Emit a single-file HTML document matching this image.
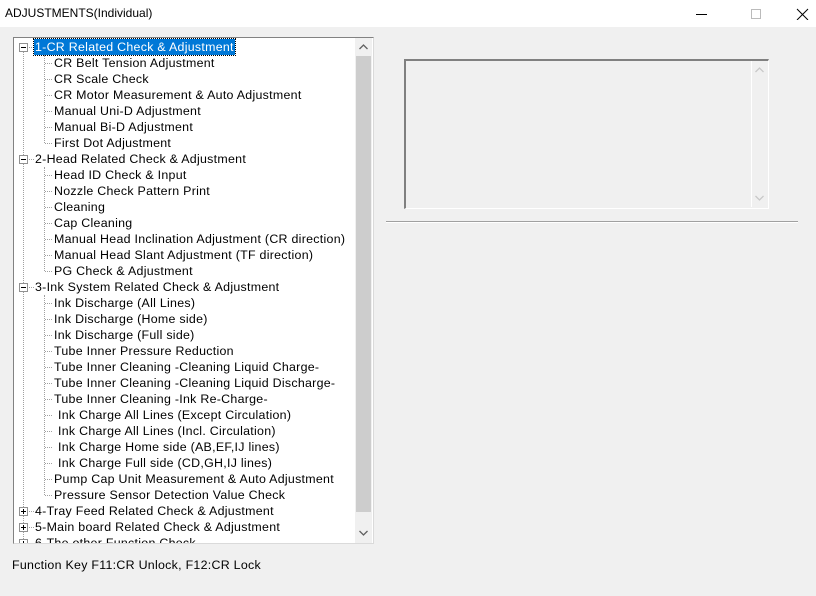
<!DOCTYPE html>
<html><head><meta charset="utf-8"><style>
*{margin:0;padding:0;box-sizing:border-box}
body{width:816px;height:596px;background:#f0f0f0;font-family:"Liberation Sans",sans-serif;font-size:12.4px;letter-spacing:0.28px;color:#000;position:relative;overflow:hidden}
.title{position:absolute;left:0;top:0;width:816px;height:27px;background:#fff}
.title span{position:absolute;left:5px;top:6px;font-size:12px;letter-spacing:0}
.tree{position:absolute;left:13px;top:37px;width:361px;height:507px;background:#fff;border:1px solid #828282;border-right-color:#dadada;border-bottom-color:#dadada;overflow:hidden}
.r{position:absolute;height:16px;line-height:16px;white-space:pre}
.sel{background:#0078d7;color:#fff;outline:1px dotted #000;padding:0 1px}
.h{position:absolute;height:0;border-top:1px dotted #a0a0a0}
.v{position:absolute;width:0;border-left:1px dotted #a0a0a0}
.c{position:absolute;left:31px;width:7px;height:0;border-top:1px dotted #a0a0a0}
.bx{position:absolute;width:9px;height:9px;border:1px solid #919191;background:#fff}
.bx:before{content:"";position:absolute;left:1px;top:3px;width:5px;height:1px;background:#000}
.bx.p:after{content:"";position:absolute;left:3px;top:1px;width:1px;height:5px;background:#000}
.sb{position:absolute;left:341px;top:0;width:17px;height:505px;background:#f0f0f0}
.thumb{position:absolute;left:1px;top:18px;width:15px;height:456px;background:#cdcdcd}
</style></head><body>
<div class="title"><span>ADJUSTMENTS(Individual)</span>
<svg style="position:absolute;left:690px;top:8px" width="120" height="12"><line x1="6" y1="6.5" x2="17" y2="6.5" stroke="#000"/><rect x="61.5" y="1.5" width="9" height="9" fill="none" stroke="#bbb"/><path d="M107 1L118 12M118 1L107 12" stroke="#000"/></svg></div>

<div class="tree">
<div class="v" style="left:9px;top:9px;height:496px"></div>
<div class="v" style="left:30px;top:17px;height:88px"></div>
<div class="v" style="left:30px;top:129px;height:104px"></div>
<div class="v" style="left:30px;top:257px;height:200px"></div>
<div class="c" style="top:25px"></div><div class="c" style="top:41px"></div><div class="c" style="top:57px"></div><div class="c" style="top:73px"></div><div class="c" style="top:89px"></div><div class="c" style="top:105px"></div>
<div class="c" style="top:137px"></div><div class="c" style="top:153px"></div><div class="c" style="top:169px"></div><div class="c" style="top:185px"></div><div class="c" style="top:201px"></div><div class="c" style="top:217px"></div><div class="c" style="top:233px"></div>
<div class="c" style="top:265px"></div><div class="c" style="top:281px"></div><div class="c" style="top:297px"></div><div class="c" style="top:313px"></div><div class="c" style="top:329px"></div><div class="c" style="top:345px"></div><div class="c" style="top:361px"></div><div class="c" style="top:377px"></div><div class="c" style="top:393px"></div><div class="c" style="top:409px"></div><div class="c" style="top:425px"></div><div class="c" style="top:441px"></div><div class="c" style="top:457px"></div>
<div class="bx" style="left:5px;top:5px"></div>
<div class="bx" style="left:5px;top:117px"></div>
<div class="bx" style="left:5px;top:245px"></div>
<div class="bx p" style="left:5px;top:469px"></div>
<div class="bx p" style="left:5px;top:485px"></div>
<div class="bx p" style="left:5px;top:501px"></div>
<div class="h" style="left:15px;top:9px;width:5px"></div>
<div class="h" style="left:15px;top:121px;width:5px"></div>
<div class="h" style="left:15px;top:249px;width:5px"></div>
<div class="h" style="left:15px;top:473px;width:5px"></div>
<div class="h" style="left:15px;top:489px;width:5px"></div>
<div class="h" style="left:15px;top:505px;width:5px"></div>

<div class="r sel" style="left:20px;top:1px">1-CR Related Check &amp; Adjustment</div>
<div class="r" style="left:40px;top:17px">CR Belt Tension Adjustment</div>
<div class="r" style="left:40px;top:33px">CR Scale Check</div>
<div class="r" style="left:40px;top:49px">CR Motor Measurement &amp; Auto Adjustment</div>
<div class="r" style="left:40px;top:65px">Manual Uni-D Adjustment</div>
<div class="r" style="left:40px;top:81px">Manual Bi-D Adjustment</div>
<div class="r" style="left:40px;top:97px">First Dot Adjustment</div>
<div class="r" style="left:21px;top:113px">2-Head Related Check &amp; Adjustment</div>
<div class="r" style="left:40px;top:129px">Head ID Check &amp; Input</div>
<div class="r" style="left:40px;top:145px">Nozzle Check Pattern Print</div>
<div class="r" style="left:40px;top:161px">Cleaning</div>
<div class="r" style="left:40px;top:177px">Cap Cleaning</div>
<div class="r" style="left:40px;top:193px">Manual Head Inclination Adjustment (CR direction)</div>
<div class="r" style="left:40px;top:209px">Manual Head Slant Adjustment (TF direction)</div>
<div class="r" style="left:40px;top:225px">PG Check &amp; Adjustment</div>
<div class="r" style="left:21px;top:241px">3-Ink System Related Check &amp; Adjustment</div>
<div class="r" style="left:40px;top:257px">Ink Discharge (All Lines)</div>
<div class="r" style="left:40px;top:273px">Ink Discharge (Home side)</div>
<div class="r" style="left:40px;top:289px">Ink Discharge (Full side)</div>
<div class="r" style="left:40px;top:305px">Tube Inner Pressure Reduction</div>
<div class="r" style="left:40px;top:321px">Tube Inner Cleaning -Cleaning Liquid Charge-</div>
<div class="r" style="left:40px;top:337px">Tube Inner Cleaning -Cleaning Liquid Discharge-</div>
<div class="r" style="left:40px;top:353px">Tube Inner Cleaning -Ink Re-Charge-</div>
<div class="r" style="left:44px;top:369px">Ink Charge All Lines (Except Circulation)</div>
<div class="r" style="left:44px;top:385px">Ink Charge All Lines (Incl. Circulation)</div>
<div class="r" style="left:44px;top:401px">Ink Charge Home side (AB,EF,IJ lines)</div>
<div class="r" style="left:44px;top:417px">Ink Charge Full side (CD,GH,IJ lines)</div>
<div class="r" style="left:40px;top:433px">Pump Cap Unit Measurement &amp; Auto Adjustment</div>
<div class="r" style="left:40px;top:449px">Pressure Sensor Detection Value Check</div>
<div class="r" style="left:21px;top:465px">4-Tray Feed Related Check &amp; Adjustment</div>
<div class="r" style="left:21px;top:481px">5-Main board Related Check &amp; Adjustment</div>
<div class="r" style="left:21px;top:497px">6-The other Function Check</div>

<div class="sb"><div class="thumb"></div>
<svg style="position:absolute;left:4px;top:6px" width="9" height="6"><path d="M0.5 5L4.5 1L8.5 5" fill="none" stroke="#606060" stroke-width="1.3"/></svg>
<svg style="position:absolute;left:4px;top:492px" width="9" height="6"><path d="M0.5 1L4.5 5L8.5 1" fill="none" stroke="#606060" stroke-width="1.3"/></svg>
</div>
</div>

<div style="position:absolute;left:404px;top:59px;width:365px;height:150px;border:1px solid #fff;border-top:2px solid #808080;border-left:2px solid #808080">
<div style="position:absolute;right:0;top:0;width:17px;height:146px;border-left:1px solid #fff"></div>
<svg style="position:absolute;right:4px;top:6px" width="9" height="6"><path d="M0.5 5L4.5 1L8.5 5" fill="none" stroke="#c8c8c8" stroke-width="1.3"/></svg>
<svg style="position:absolute;right:4px;top:134px" width="9" height="6"><path d="M0.5 1L4.5 5L8.5 1" fill="none" stroke="#c8c8c8" stroke-width="1.3"/></svg>
</div>
<div style="position:absolute;left:386px;top:221px;width:412px;height:2px;border-top:1px solid #a0a0a0;border-bottom:1px solid #fff"></div>

<div style="position:absolute;left:12px;top:558px">Function Key F11:CR Unlock, F12:CR Lock</div>
</body></html>
